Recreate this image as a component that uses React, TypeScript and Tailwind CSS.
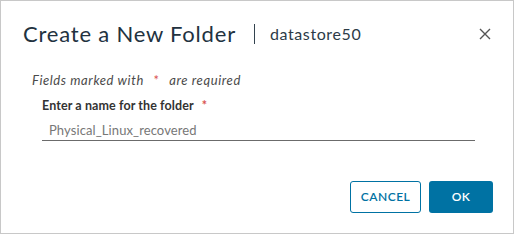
export default function App() {
  return (
    <div className="w-[516px] h-[236px] bg-white font-['Lato','Liberation_Sans',sans-serif]">
      <div className="w-[514px] h-[234px] border border-[#c8c8c8] bg-white flex flex-col">
        {/* header */}
        <div className="flex items-center pl-[22px] pr-[21px] pt-[20px] h-[46px]">
          <h1 className="text-[22px] leading-none text-[#22323f] tracking-[0.8px]">Create a New Folder</h1>
          <div className="w-px h-[20px] bg-[#33434f] ml-[18px] mr-[15px]" />
          <span className="text-[16px] leading-none text-[#2c3b47] tracking-[0.6px]">datastore50</span>
          <button className="ml-auto w-[14px] h-[14px] text-[#555] flex items-center justify-center">
            <svg viewBox="0 0 14 14" width="14" height="14" fill="none" stroke="currentColor" strokeWidth="1.4">
              <path d="M2 2 L12 12 M12 2 L2 12" />
            </svg>
          </button>
        </div>

        {/* body */}
        <div className="flex flex-col pl-[31px] pr-[38px] pt-[27px]">
          <p className="text-[13px] italic text-[#4a4a4a] leading-none tracking-[0.6px]">
            Fields marked with <span className="text-[#d9534f] mx-[6px] not-italic">*</span> are required
          </p>
          <div className="pl-[10px] pt-[13px]">
            <label className="block text-[12.5px] font-bold text-[#333] leading-none tracking-[0.1px]">
              Enter a name for the folder <span className="text-[#d9534f] ml-[5px]">*</span>
            </label>
            <div className="mt-[11px] border-b border-[#6b6b6b] pb-[3px] pl-[7px]">
              <span className="block text-[13px] text-[#777] leading-none tracking-[0.1px]">Physical_Linux_recovered</span>
            </div>
          </div>
        </div>

        {/* footer */}
        <div className="flex justify-end gap-[8px] mt-auto mb-[20px] pr-[20px]">
          <button className="w-[71px] h-[32px] rounded-[3px] border border-[#0072a3] text-[#0072a3] text-[12px] font-semibold bg-white tracking-[0.5px]">
            CANCEL
          </button>
          <button className="w-[64px] h-[32px] rounded-[3px] bg-[#0072a3] text-white text-[12px] font-semibold tracking-[0.5px]">
            OK
          </button>
        </div>
      </div>
    </div>
  );
}
